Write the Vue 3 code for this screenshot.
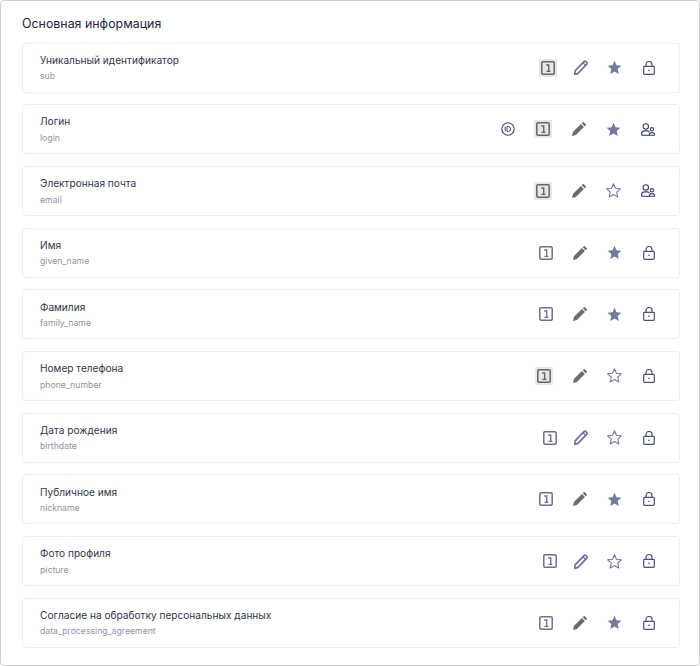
<script setup>
const rows = [
  { name: 'Уникальный идентификатор', key: 'sub', hi: true, fill: false, star: true, users: false },
  { name: 'Логин', key: 'login', id: true, hi: true, fill: true, star: true, users: true },
  { name: 'Электронная почта', key: 'email', hi: true, fill: true, star: false, users: true },
  { name: 'Имя', key: 'given_name', hi: false, fill: true, star: true, users: false },
  { name: 'Фамилия', key: 'family_name', hi: false, fill: true, star: true, users: false },
  { name: 'Номер телефона', key: 'phone_number', hi: true, fill: true, star: false, users: false },
  { name: 'Дата рождения', key: 'birthdate', hi: false, fill: false, star: false, users: false },
  { name: 'Публичное имя', key: 'nickname', hi: false, fill: true, star: true, users: false },
  { name: 'Фото профиля', key: 'picture', hi: false, fill: false, star: false, users: false },
  { name: 'Согласие на обработку персональных данных', key: 'data_processing_agreement', hi: false, fill: true, star: true, users: false }
]
const starPath = 'M7.5 .8l2 4.5 4.9.5-3.7 3.3 1.1 4.8-4.3-2.5-4.3 2.5 1.1-4.8L.6 5.8l4.9-.5z'
</script>

<template>
  <div class="page">
    <h2 class="title">Основная информация</h2>
    <div class="list">
      <div v-for="r in rows" :key="r.key" class="row">
        <div class="text">
          <div class="name">{{ r.name }}</div>
          <div class="key">{{ r.key }}</div>
        </div>
        <div class="actions">
          <svg v-if="r.id" class="i-id" width="14" height="14" viewBox="0 0 14 14" fill="none">
            <circle cx="7" cy="7" r="6.2" stroke="#3f4573" stroke-width="1.1" />
            <path d="M4.2 4.6v4.8M6 4.6v4.8h1.2a2.400 2.400 0 0 0 0-4.800z" stroke="#3f4573" stroke-width="1" />
          </svg>
          <span class="one" :class="{ hi: r.hi }">
            <svg width="14" height="14" viewBox="0 0 14 14" fill="none">
              <rect x=".8" y=".8" width="12.400" height="12.400" rx="1.200" stroke="currentColor" stroke-width="1.500" />
              <path d="M5.200 4h2.500v6.600M5.400 10.400h4" stroke="currentColor" stroke-width="1.400" />
            </svg>
          </span>
          <svg v-if="r.fill" class="pen-fill" width="14" height="14" viewBox="0 0 14 14">
            <path d="M0 14l.9-3.900 8-8 3 3-8 8zM9.700 1.300L10.800.2a.7.7 0 0 1 1 0l2 2a.7.7 0 0 1 0 1l-1.100 1.100z" fill="#6c6c6e" />
          </svg>
          <svg v-else class="pen-line" width="14" height="15" viewBox="0 0 13 14" fill="none">
            <path d="M1 10.200L9.300 1.500a1.200 1.200 0 0 1 1.700 0l.8.8a1.200 1.200 0 0 1 0 1.700L3.400 12.700l-2.800.7z" stroke="#6f7497" stroke-width="1.600" stroke-linejoin="round" />
            <path d="M8.300 2.600l2.600 2.600" stroke="#6f7497" stroke-width="1.200" />
          </svg>
          <svg class="star" width="15" height="15" viewBox="0 0 15 15">
            <path v-if="r.star" :d="starPath" fill="#757a9b" />
            <path v-else :d="starPath" fill="none" stroke="#757a9b" stroke-width="1.100" stroke-linejoin="round" />
          </svg>
          <svg v-if="r.users" class="users" width="14" height="13" viewBox="0 0 14 13" fill="none" stroke="#3a4072" stroke-width="1.100">
            <circle cx="4.800" cy="3.400" r="2.700" />
            <path d="M.6 12.300v-1.400a3 3 0 0 1 3-3h2.400a3 3 0 0 1 2.400 1.200" />
            <path d="M.6 12.300h7.600" />
            <circle cx="10.900" cy="6.300" r="1.700" />
            <path d="M8.300 12.300v-.6a2.200 2.200 0 0 1 2.200-2.100h.9a2.200 2.200 0 0 1 2.200 2.100v.6z" />
          </svg>
          <svg v-else class="lock" width="12" height="14" viewBox="0 0 12 14" fill="none" stroke="#4a5078" stroke-width="1.200">
            <rect x=".7" y="5.400" width="10.600" height="8" rx=".8" />
            <path d="M3 5.400V3.500a3 3 0 0 1 6 0v1.900" />
            <circle cx="6" cy="9.300" r=".8" fill="#3f4573" stroke="none" />
          </svg>
        </div>
      </div>
    </div>
  </div>
</template>

<style>
html, body { margin: 0; background: #fff; }
</style>

<style scoped>
.page {
  box-sizing: border-box;
  width: 700px;
  height: 666px;
  padding: 15px 19px 0 21px;
  background: #fff;
  border: 1px solid #cfcfcf;
  border-radius: 4px;
  font-family: Inter, "Noto Sans", sans-serif;
}
.title {
  margin: 0 0 11.500px;
  font-size: 12.400px;
  line-height: 15px;
  font-weight: 400;
  color: #23263a;
}
.list {
  display: flex;
  flex-direction: column;
  gap: 11.700px;
}
.row {
  box-sizing: border-box;
  height: 50px;
  display: flex;
  align-items: center;
  justify-content: space-between;
  padding: 0 24px 0 17px;
  border: 1px solid #efeff2;
  border-radius: 3px;
}
.name {
  font-size: 10.150px;
  line-height: 14px;
  color: #33364c;
}
.key {
  margin-top: 3.500px;
  font-size: 8.700px;
  line-height: 12px;
  color: #8f93a5;
}
.actions {
  display: flex;
  align-items: center;
}
.actions svg { display: block; }
.i-id { margin-right: 19px; }
.one {
  display: flex;
  align-items: center;
  justify-content: center;
  color: #6d718c;
}
.one.hi {
  width: 18px;
  height: 18px;
  background: #e7e7e7;
  color: #666;
}
.pen-line { margin: 0 0 0 16.500px; }
.pen-fill { margin: 0 .5px 0 20px; }
.star { margin-left: 19px; }
.lock { margin-left: 21.500px; }
.users { margin-left: 20.500px; }
</style>
